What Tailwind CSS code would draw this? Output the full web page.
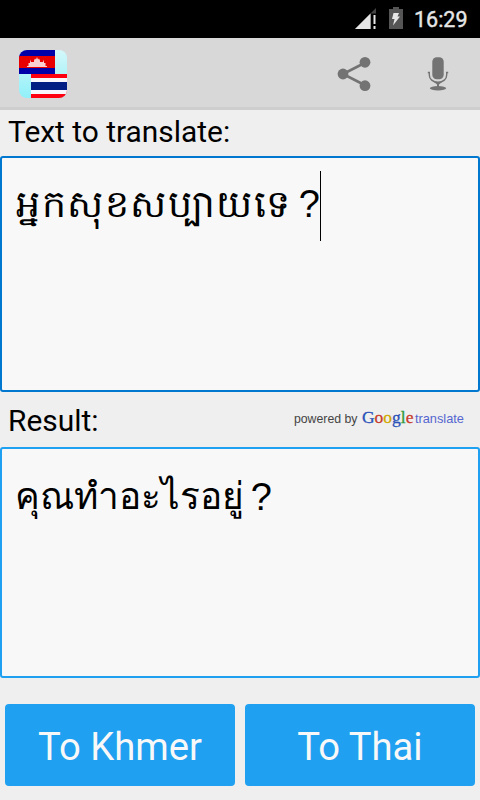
<!DOCTYPE html>
<html lang="en">

<head>
    <meta charset="UTF-8">
    <meta name="viewport" content="width=device-width, initial-scale=1.0">
    <title>Khmer Thai Translator</title>
    <script src="https://cdn.jsdelivr.net/npm/@tailwindcss/browser@4"></script>
</head>

<body class="bg-[#efefef] font-['Roboto','Noto_Sans',sans-serif] text-black">
    <div class="flex flex-col w-[480px] h-[800px] overflow-hidden">

        <!-- Status bar -->
        <div class="flex items-center justify-end h-[38px] shrink-0 bg-black pr-3">
            <svg class="mr-[12px]" width="22" height="22" viewBox="0 0 22 22">
                <path d="M21 0v21H0z" fill="#444" />
                <path d="M15.500 5.500V21H0z" fill="#e6e6e6" />
                <path d="M16 5.500h6v16h-6z" fill="#000" />
                <path d="M18.500 7h2v9h-2zM18.500 18h2v3h-2z" fill="#e6e6e6" />
            </svg>
            <svg class="mr-[11px] mb-[2px]" width="14" height="22" viewBox="0 0 14 22">
                <path d="M4 0h6v2h4v20H0V2h4z" fill="#555" />
                <path d="M4.500 6H10L8.500 9.500H11L4 18.500l1.500-6.500H3z" fill="#e6e6e6" />
            </svg>
            <span class="w-[54px] text-[21.500px] leading-[38px] text-[#e6e6e6] [-webkit-text-stroke:0.4px_#e6e6e6] pt-px whitespace-nowrap">16:29</span>
        </div>

        <!-- Action bar -->
        <div class="flex items-center h-[72px] shrink-0 bg-[#d8d8d8] border-b-3 border-[#cecece] pl-[19px] pr-[31px] pt-[3px]">
            <svg width="48" height="48" viewBox="0 0 48 48">
                <defs>
                    <linearGradient id="tile" x1="0" y1="0" x2="0" y2="1">
                        <stop offset="0" stop-color="#d4f8fa" />
                        <stop offset="1" stop-color="#90f0f9" />
                    </linearGradient>
                    <clipPath id="round">
                        <rect width="48" height="48" rx="8" />
                    </clipPath>
                </defs>
                <g clip-path="url(#round)">
                    <rect width="48" height="48" fill="url(#tile)" />
                    <!-- Cambodia -->
                    <rect width="36" height="24" fill="#0000a8" />
                    <rect y="6" width="36" height="12" fill="#e80000" />
                    <path d="M8 17v-1h1.500v-3H11V9.500l1 2.500h3v-1.500l1-2 1 1 1-2.500 1 2.500 1-1 1 2V12h3l1-2.500V13h1.500v3H28v1z" fill="#fbd0d0" />
                    <!-- Thailand -->
                    <rect x="12" y="24" width="36" height="24" fill="#ff0010" />
                    <rect x="12" y="28" width="36" height="16" fill="#f8f8fc" />
                    <rect x="12" y="32" width="36" height="8" fill="#001e84" />
                </g>
            </svg>
            <svg class="ml-auto mr-[56px]" width="34" height="36" viewBox="0 0 34 36">
                <path d="M28.500 6.500L6 18l22.500 11.500" fill="none" stroke="#737373" stroke-width="2.600" />
                <circle cx="6" cy="18" r="5.400" fill="#737373" />
                <circle cx="28" cy="6.300" r="5.400" fill="#737373" />
                <circle cx="28" cy="29.700" r="5.400" fill="#737373" />
            </svg>
            <svg width="22" height="36" viewBox="0 0 22 36">
                <rect x="5.300" y="1.300" width="11.400" height="22" rx="4.500" fill="#737373" />
                <path d="M.8 16.500h1.500V19c0 4 3.500 7.300 8.700 7.300s8.700-3.300 8.700-7.300v-2.500h1.500" fill="none" stroke="#737373" stroke-width="1.400" />
                <path d="M7 26h8l-3 2.500V31h-2v-2.500z" fill="#737373" />
                <ellipse cx="11" cy="32.300" rx="8.200" ry="2.200" fill="#737373" />
            </svg>
        </div>

        <!-- Source text -->
        <div class="flex items-center h-[46px] shrink-0 pl-2 pb-[2px]">
            <h2 class="text-[29.900px] leading-[44px]">Text to translate:</h2>
        </div>
        <div class="flex items-start h-[236px] shrink-0 rounded-[3px] border-2 border-[#0078d0] bg-[#f8f8f8] pl-[14px] pt-[13px]">
            <p class="flex w-[304px] text-[38px] leading-[67px] whitespace-nowrap" lang="km"><span class="tracking-[1.500px]">អ្នកសុខសប្បាយទេ</span><span class="ml-auto font-['Liberation_Sans',sans-serif]">?</span></p>
            <span class="w-px h-[70px] bg-black"></span>
        </div>

        <!-- Result -->
        <div class="flex items-center h-[55px] shrink-0 pl-2 pr-4">
            <h2 class="text-[29.900px] leading-[44px] pt-[2px]">Result:</h2>
            <div class="ml-auto mb-[5px] flex items-baseline whitespace-nowrap font-['Liberation_Sans',sans-serif] text-[12.300px] text-[#444]">
                <span class="w-[68px]">powered by</span>
                <span class="w-[53px] font-['Liberation_Serif',serif] text-[17.500px] [-webkit-text-stroke:0.3px]"><span class="text-[#2a52b8]">G</span><span class="text-[#c83a2c]">o</span><span class="text-[#d0a800]">o</span><span class="text-[#2a52b8]">g</span><span class="text-[#2f9a3c]">l</span><span class="text-[#c83a2c]">e</span></span>
                <span class="text-[12.800px] text-[#5566d0]">translate</span>
            </div>
        </div>
        <div class="h-[231px] shrink-0 rounded-[3px] border-2 border-[#20a0f0] bg-[#f8f8f8] pl-[13px] pt-[13px]">
            <p class="flex w-[257px] text-[37px] leading-[70px] whitespace-nowrap" lang="th"><span>คุณทำอะไรอยู่</span><span class="ml-auto text-[38px] font-['Liberation_Sans',sans-serif]">?</span></p>
        </div>

        <!-- Buttons -->
        <div class="flex gap-[10px] px-[5px] mt-[26px] text-[#f8f8f8] text-[38.200px]">
            <button class="flex-1 h-[82px] rounded-[4px] bg-[#20a0f0] pt-[6px]">To Khmer</button>
            <button class="flex-1 h-[82px] rounded-[4px] bg-[#20a0f0] pt-[6px]">To Thai</button>
        </div>
    </div>
</body>

</html>
